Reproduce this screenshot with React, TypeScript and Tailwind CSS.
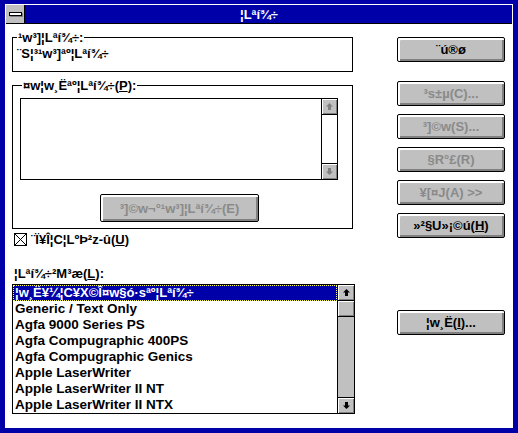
import React from 'react';

const font = { fontFamily: '"Liberation Sans", Arial, sans-serif' };

const Arrow: React.FC<{ dir: 'up' | 'down'; disabled?: boolean }> = ({ dir, disabled }) => {
    const color = disabled ? '#808080' : '#000000';
    return (
        <svg width="9" height="9" viewBox="0 0 9 9" className={dir === 'down' ? 'rotate-180' : ''}>
            <polygon points="4.5,1 8,4.5 6,4.5 6,8 3,8 3,4.5 1,4.5" fill={color} />
        </svg>
    );
};

const ArrowBox: React.FC<{ dir: 'up' | 'down'; disabled?: boolean; className?: string }> = ({ dir, disabled, className }) => (
    <div className={`h-[16px] w-full bg-[#c0c0c0] flex items-center justify-center shadow-[inset_1px_1px_0_#ffffff,inset_-1px_-1px_0_#808080] ${className ?? ''}`}>
        <Arrow dir={dir} disabled={disabled} />
    </div>
);

const Win3Button: React.FC<{ children: React.ReactNode; disabled?: boolean; className?: string }> = ({ children, disabled, className }) => (
    <button
        className={`w-[108px] h-[25px] bg-[#c0c0c0] border border-black rounded-[2px] shadow-[inset_1px_1px_0_#ffffff,inset_2px_2px_0_#ffffff,inset_-1px_-1px_0_#808080,inset_-2px_-2px_0_#808080] flex items-center justify-center text-[13px] font-bold leading-none ${disabled ? 'text-[#8a8a8a]' : 'text-black'} ${className ?? ''}`}
    >
        {children}
    </button>
);

const printers = [
    'Generic / Text Only',
    'Agfa 9000 Series PS',
    'Agfa Compugraphic 400PS',
    'Agfa Compugraphic Genics',
    'Apple LaserWriter',
    'Apple LaserWriter II NT',
    'Apple LaserWriter II NTX',
];

export default function App() {
    return (
        <div className="w-[518px] h-[433px] bg-[#0000a8] pt-[4px] pb-[5px] pl-[5px] pr-[5px] select-none" style={font}>
            <div className="h-full border border-white flex flex-col">
                {/* title bar */}
                <div className="h-[19px] flex-shrink-0 bg-[#0000a8] border-b border-black flex">
                    <div className="w-[19px] h-[18px] bg-[#c0c0c0] border-r border-black flex items-center justify-center">
                        <div className="w-[13px] h-[4px] bg-white border border-black shadow-[1px_1px_0_#808080]" />
                    </div>
                    <div className="flex-1 flex items-center justify-center text-white font-bold text-[13px] leading-none pr-[19px]">
                        ¦Lªí¾÷
                    </div>
                </div>

                {/* client */}
                <div className="flex-1 bg-white flex text-black text-[13px] font-bold">
                    <div className="ml-[6px] w-[343px] flex flex-col pt-[6px]">
                        <fieldset className="w-[341px] h-[42px] border border-black">
                            <legend className="ml-[4px] px-[1px] leading-[15px]">¹w³]¦Lªí¾÷:</legend>
                            <div className="pl-[4px] pt-[1px] leading-[15px]">¨S¦³¹w³]ªº¦Lªí¾÷</div>
                        </fieldset>

                        <fieldset className="mt-[6px] w-[341px] h-[151px] border border-black">
                            <legend className="ml-[9px] px-[1px] leading-[15px]">
                                ¤w¦w¸Ëªº¦Lªí¾÷(<u>P</u>):
                            </legend>
                            <div className="ml-[7px] mt-[5px] w-[318px] h-[82px] border border-black flex">
                                <div className="flex-1" />
                                <div className="w-[16px] border-l border-black flex flex-col justify-between">
                                    <ArrowBox dir="up" disabled className="border-b border-black" />
                                    <ArrowBox dir="down" disabled className="border-t border-black" />
                                </div>
                            </div>
                            <div className="mt-[14px] ml-[87px]">
                                <Win3Button disabled className="w-[159px] h-[28px]">
                                    ³]©w¬°¹w³]¦Lªí¾÷(E)
                                </Win3Button>
                            </div>
                        </fieldset>

                        <div className="mt-[3px] ml-[2px] flex items-center gap-[4px] leading-[15px]">
                            <div className="w-[13px] h-[13px] border border-black">
                                <svg width="11" height="11" viewBox="0 0 11 11">
                                    <line x1="0" y1="0" x2="11" y2="11" stroke="black" strokeWidth="1" />
                                    <line x1="11" y1="0" x2="0" y2="11" stroke="black" strokeWidth="1" />
                                </svg>
                            </div>
                            <span>
                                ¨Ï¥Î¦C¦LºÞ²z-û(<u>U</u>)
                            </span>
                        </div>

                        <div className="mt-[19px] ml-[2px] leading-[15px]">
                            ¦Lªí¾÷²M³æ(<u>L</u>):
                        </div>

                        <div className="mt-[3px] w-[343px] h-[130px] border border-black flex">
                            <div className="flex-1 flex flex-col overflow-hidden text-[13.5px]">
                                <div className="h-[16px] bg-[#0000a8] text-white text-[13px] border border-dotted border-[#ffff54] pl-[1px] leading-[14px] whitespace-nowrap">
                                    ¦w¸Ë¥¼¦C¥X©Î¤w§ó·sªº¦Lªí¾÷
                                </div>
                                {printers.map((p) => (
                                    <div key={p} className="h-[16px] pl-[2px] leading-[16px] whitespace-nowrap">
                                        {p}
                                    </div>
                                ))}
                            </div>
                            <div className="w-[17px] border-l border-black bg-[#c0c0c0] flex flex-col justify-between">
                                <div className="flex flex-col">
                                    <ArrowBox dir="up" className="border-b border-black" />
                                    <div className="h-[16px] bg-[#c0c0c0] border-b border-black shadow-[inset_1px_1px_0_#ffffff,inset_-1px_-1px_0_#808080]" />
                                </div>
                                <ArrowBox dir="down" className="border-t border-black" />
                            </div>
                        </div>
                    </div>

                    {/* right buttons */}
                    <div className="ml-[42px] w-[108px] flex flex-col pt-[13px]">
                        <Win3Button>¨ú®ø</Win3Button>
                        <Win3Button disabled className="mt-[19px]">³s±µ(C)...</Win3Button>
                        <Win3Button disabled className="mt-[8px]">³]©w(S)...</Win3Button>
                        <Win3Button disabled className="mt-[8px]">§R°£(R)</Win3Button>
                        <Win3Button disabled className="mt-[8px]">¥[¤J(A) &gt;&gt;</Win3Button>
                        <Win3Button className="mt-[8px]">
                            »²§U»¡©ú(<u>H</u>)
                        </Win3Button>
                        <Win3Button className="mt-[72px]">
                            ¦w¸Ë(<u>I</u>)...
                        </Win3Button>
                    </div>
                </div>
            </div>
        </div>
    );
}
